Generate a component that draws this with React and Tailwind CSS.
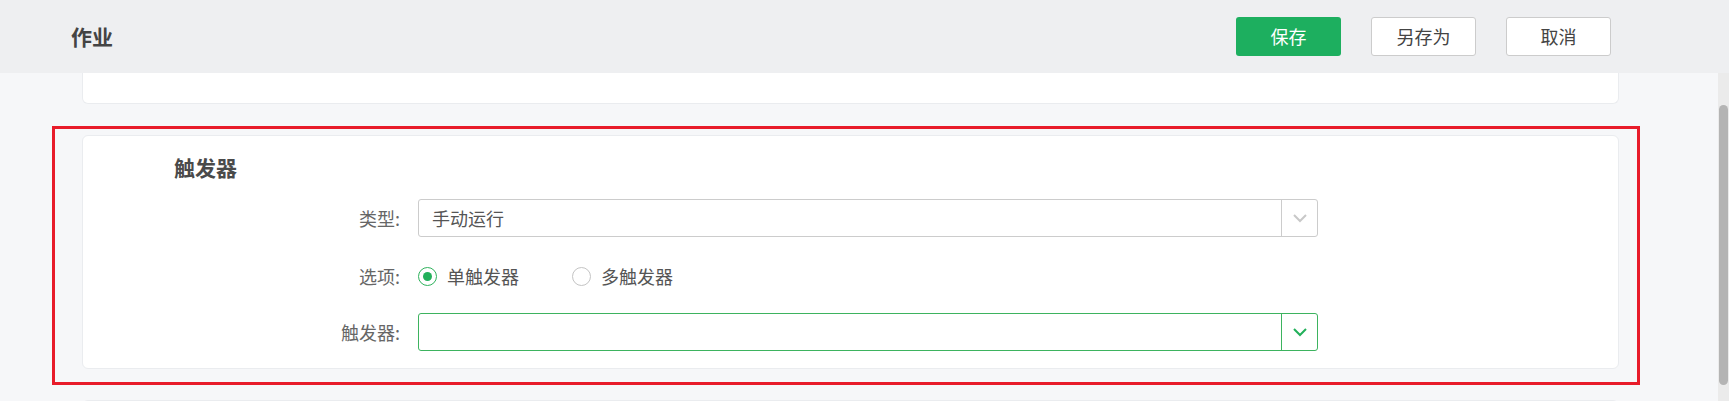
import React from 'react';

const font = { fontFamily: '"Noto Sans CJK SC", "Noto Sans", sans-serif' };

function Chevron({ color }) {
  return (
    <svg width="16" height="10" viewBox="0 0 16 10" fill="none">
      <polyline points="2,2 8,8 14,2" stroke={color} strokeWidth="2" fill="none" />
    </svg>
  );
}

function Select({ value, active }) {
  const border = active ? 'border-[#3db35f]' : 'border-[#cccccc]';
  return (
    <div className={`flex h-[38px] w-[900px] rounded-[3px] border bg-white ${border}`}>
      <div className="flex flex-1 items-center pl-[13px] text-[18px] text-[#555]">{value}</div>
      <div className={`flex w-[36px] items-center justify-center border-l ${border}`}>
        <Chevron color={active ? '#22b05a' : '#c8c8c8'} />
      </div>
    </div>
  );
}

function Radio({ checked, label }) {
  return (
    <div className="flex items-center">
      <span
        className={`flex h-[19px] w-[19px] items-center justify-center rounded-full border ${
          checked ? 'border-[#2fb25c]' : 'border-[#c4c4c4]'
        }`}
      >
        {checked && <span className="h-[9px] w-[9px] rounded-full bg-[#22b05a]" />}
      </span>
      <span className="ml-[10px] text-[18px] text-[#555]">{label}</span>
    </div>
  );
}

function Row({ label, children, className }) {
  return (
    <div className={`flex items-center ${className}`}>
      <div className="w-[226px] pr-[2px] text-right text-[18px] text-[#666]">{label}</div>
      <div className="ml-[16px]">{children}</div>
    </div>
  );
}

export default function App() {
  return (
    <div className="flex h-[401px] w-[1729px] flex-col overflow-hidden bg-[#f6f7f9]" style={font}>
      <header className="flex h-[73px] shrink-0 items-center bg-[#eeeff1] pl-[71px] pr-[118px]">
        <h1 className="text-[21px] font-bold text-[#444]">作业</h1>
        <div className="ml-auto flex gap-[30px]">
          <button className="h-[39px] w-[105px] rounded-[3px] bg-[#1daf5f] text-[18px] text-white">保存</button>
          <button className="h-[39px] w-[105px] rounded-[3px] border border-[#cccccc] bg-white text-[18px] text-[#444]">
            另存为
          </button>
          <button className="h-[39px] w-[105px] rounded-[3px] border border-[#cccccc] bg-white text-[18px] text-[#444]">
            取消
          </button>
        </div>
      </header>

      <div className="flex min-h-0 flex-1">
        <div className="flex w-[1718px] flex-col overflow-hidden">
          <div className="ml-[82px] h-[31px] w-[1537px] shrink-0 rounded-b-[6px] border border-t-0 border-[#eaecef] bg-white" />

          <div className="ml-[52px] mt-[22px] w-[1588px] shrink-0 border-[3px] border-[#e81c2a] pb-[13px] pl-[27px] pr-[18px] pt-[6px]">
            <section className="rounded-[6px] border border-[#eaecef] bg-white pb-[17px] pl-[91px] pt-[16px]">
              <h2 className="h-[30px] text-[21px] font-bold leading-[30px] text-[#4a4a4a]">触发器</h2>
              <Row label="类型:" className="ml-[2px] mt-[17px]">
                <Select value="手动运行" />
              </Row>
              <Row label="选项:" className="ml-[2px] mt-[20px] h-[38px]">
                <div className="flex items-center gap-[53px]">
                  <Radio checked label="单触发器" />
                  <Radio label="多触发器" />
                </div>
              </Row>
              <Row label="触发器:" className="ml-[2px] mt-[18px]">
                <Select value="" active />
              </Row>
            </section>
          </div>

          <div className="ml-[82px] mt-[15px] h-[60px] w-[1537px] shrink-0 rounded-t-[6px] border border-[#eaecef] bg-white" />
        </div>

        <div className="w-[11px] shrink-0 bg-[#ebebeb] pl-[1px]">
          <div className="mt-[32px] h-[280px] w-[9px] rounded-full bg-[#b4b4b4]" />
        </div>
      </div>
    </div>
  );
}
